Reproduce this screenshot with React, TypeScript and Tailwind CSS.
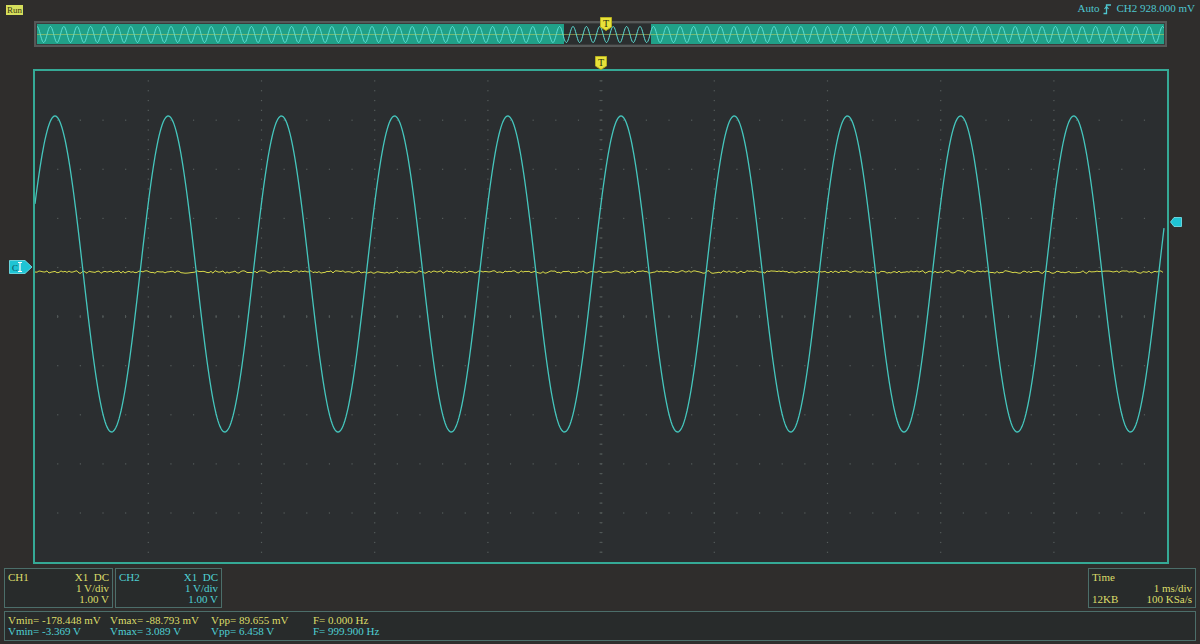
import React from "react";

const W = 1132;
const H = 491;

function sinePath(): string {
  const pts: string[] = [];
  const cy = 203;
  const amp = 158;
  const period = 113.2;
  const peak = 20;
  for (let x = 0; x <= W - 3; x += 1) {
    const y = cy - amp * Math.cos((2 * Math.PI * (x - peak)) / period);
    pts.push(`${x === 0 ? "M" : "L"}${x.toFixed(1)},${y.toFixed(1)}`);
  }
  return pts.join(" ");
}

function noisePath(): string {
  const pts: string[] = [];
  let seed = 7;
  const rnd = () => {
    seed = (seed * 9301 + 49297) % 233280;
    return seed / 233280;
  };
  for (let x = 0; x <= W - 3; x += 2) {
    const y = 201 + (rnd() - 0.5) * 2.6;
    pts.push(`${x === 0 ? "M" : "L"}${x},${y.toFixed(1)}`);
  }
  return pts.join(" ");
}

function overviewPath(): string {
  const pts: string[] = [];
  const period = 13.4;
  for (let x = 0; x <= 1127; x += 0.5) {
    const y = 10.5 - 8 * Math.cos((2 * Math.PI * x) / period);
    pts.push(`${x === 0 ? "M" : "L"}${x},${y.toFixed(1)}`);
  }
  return pts.join(" ");
}

function Grid() {
  const els: React.ReactNode[] = [];
  const dx = W / 10;
  const dy = H / 10;
  for (let r = 1; r < 10; r++) {
    const y = r * dy;
    for (let i = 1; i < 50; i++) {
      const x = (i * dx) / 5;
      els.push(<rect key={`h${r}-${i}`} x={x - 0.5} y={y - 0.5} width={1.2} height={1.2} fill="#565d5c" />);
    }
  }
  for (let c = 1; c < 10; c++) {
    const x = c * dx;
    for (let i = 1; i < 50; i++) {
      const y = (i * dy) / 5;
      els.push(<rect key={`v${c}-${i}`} x={x - 0.5} y={y - 0.5} width={1.2} height={1.2} fill="#565d5c" />);
    }
  }
  const cx = 5 * dx;
  const cyy = 5 * dy;
  for (let i = 1; i < 50; i++) {
    const y = (i * dy) / 5;
    els.push(<line key={`ct${i}`} x1={cx - 1.5} x2={cx + 1.5} y1={y} y2={y} stroke="#525958" strokeWidth={1} />);
    const x = (i * dx) / 5;
    els.push(<line key={`ch${i}`} x1={x} x2={x} y1={cyy - 1.5} y2={cyy + 1.5} stroke="#525958" strokeWidth={1} />);
  }
  return <g>{els}</g>;
}

function TMarker() {
  return (
    <svg width="12" height="14" viewBox="0 0 12 14">
      <path d="M0.5,0.5 H11.5 V10 L6,13.5 L0.5,10 Z" fill="#e8e23a" stroke="#b8b020" strokeWidth="1" />
      <text x="6" y="9.5" textAnchor="middle" fontSize="10" fontFamily="'Liberation Serif', serif" fill="#2a2a10">T</text>
    </svg>
  );
}

export default function App() {
  const serif = { fontFamily: "'Liberation Serif', 'DejaVu Serif', serif" };
  return (
    <div className="w-[1200px] h-[644px] bg-[#2f2d2c] flex flex-col overflow-hidden" style={serif}>
      {/* Top status row */}
      <div className="h-[21px] flex items-start justify-between px-[5px]">
        <div className="mt-[5px] ml-[1px] bg-[#d6de5c] text-[#3a3a10] text-[9px] leading-[10px] h-[10px] px-[1px]">Run</div>
        <div className="mt-[1px] flex items-center gap-[3px] text-[11px] text-[#4ec6cf] leading-[15px]">
          <span>Auto</span>
          <svg width="9" height="12" viewBox="0 0 9 12" className="mx-[1px]">
            <path d="M0.5,10.5 H3.5 V2 H8" fill="none" stroke="#4ec6cf" strokeWidth="1.3" />
            <path d="M1.5,6 L3.5,3.5 L5.5,6" fill="none" stroke="#4ec6cf" strokeWidth="1.1" />
          </svg>
          <span>CH2 928.000 mV</span>
        </div>
      </div>

      {/* Overview row */}
      <div className="h-[26px] pl-[34px] relative">
        <div className="w-[1133px] h-[26px] border-2 border-[#565858] bg-[#3a3c3c] p-[1px]">
          <svg width="1127" height="20" viewBox="0 0 1127 20" className="block">
            <rect x="0" y="0" width="1127" height="20" fill="#20a088" />
            <rect x="527" y="0" width="87" height="20" fill="#2b2e2f" />
            <line x1="0" x2="1127" y1="10.5" y2="10.5" stroke="#c9d25a" strokeOpacity="0.5" strokeWidth="1" />
            <path d={overviewPath()} fill="none" stroke="#5fe0d6" strokeWidth="1" />
          </svg>
        </div>
        <div className="absolute left-[600px] top-[-4px]">
          <TMarker />
        </div>
      </div>

      {/* Gap row with T marker */}
      <div className="h-[22px] relative">
        <div className="absolute left-[595px] top-[9px]">
          <TMarker />
        </div>
      </div>

      {/* Main plot row */}
      <div className="h-[495px] flex">
        <div className="w-[33px] relative">
          <svg width="24" height="14" viewBox="0 0 24 14" className="absolute left-[9px] top-[191px]">
            <path d="M0.5,0.5 H16 L23,7 L16,13.5 H0.5 Z" fill="#1fc4d4" stroke="#7ae8f0" strokeWidth="0.8" />
            <text x="3" y="10.5" fontSize="9" fontFamily="'Liberation Serif', serif" fill="#0c4a56">C</text>
            <path d="M11,2.5 V11.5 M9,2.5 H13 M9,11.5 H13" stroke="#ffffff" strokeWidth="1.2" />
          </svg>
        </div>
        <div className="w-[1136px] h-[495px] border-2 border-[#35a996] bg-[#2b2e30]">
          <svg width={W} height={H} viewBox={`0 0 ${W} ${H}`} className="block">
            <Grid />
            <path d={noisePath()} fill="none" stroke="#d7d84a" strokeWidth="1" />
            <path d={sinePath()} fill="none" stroke="#45c6bd" strokeWidth="1.3" />
          </svg>
        </div>
        <div className="w-[31px] relative">
          <svg width="12" height="10" viewBox="0 0 12 10" className="absolute left-[1px] top-[148px]">
            <path d="M0.5,5 L4,0.5 H11.5 V9.5 H4 Z" fill="#1fc4d4" stroke="#7ae8f0" strokeWidth="0.8" />
          </svg>
        </div>
      </div>

      {/* Channel info panels */}
      <div className="mt-[4px] h-[40px] flex px-[4px] text-[11px] leading-[11px]">
        <div className="w-[109px] h-[40px] border border-[#4c6e6a] bg-[#282b2b] px-[3px] pt-[3px] text-[#dcdd6a] flex flex-col">
          <div className="flex justify-between">
            <span>CH1</span>
            <span>X1&nbsp;&nbsp;DC</span>
          </div>
          <div className="text-right">1 V/div</div>
          <div className="text-right">1.00 V</div>
        </div>
        <div className="ml-[2px] w-[107px] h-[40px] border border-[#4c6e6a] bg-[#282b2b] px-[3px] pt-[3px] text-[#4fd0d4] flex flex-col">
          <div className="flex justify-between">
            <span>CH2</span>
            <span>X1&nbsp;&nbsp;DC</span>
          </div>
          <div className="text-right">1 V/div</div>
          <div className="text-right">1.00 V</div>
        </div>
        <div className="flex-1" />
        <div className="w-[108px] h-[40px] border border-[#4c6e6a] bg-[#282b2b] px-[3px] pt-[3px] text-[#dcdd6a] flex flex-col">
          <div>Time</div>
          <div className="text-right">1 ms/div</div>
          <div className="flex justify-between">
            <span>12KB</span>
            <span>100 KSa/s</span>
          </div>
        </div>
      </div>

      {/* Measurements bar */}
      <div className="mt-[3px] mx-[4px] h-[30px] border border-[#4c6e6a] bg-[#282b2b] pl-[3px] pt-[3px] text-[11px] leading-[11px]">
        <div className="flex text-[#dcdd6a]">
          <span className="w-[102px]">Vmin= -178.448 mV</span>
          <span className="w-[101px]">Vmax= -88.793 mV</span>
          <span className="w-[102px]">Vpp= 89.655 mV</span>
          <span>F= 0.000 Hz</span>
        </div>
        <div className="flex text-[#4fd0d4]">
          <span className="w-[102px]">Vmin= -3.369 V</span>
          <span className="w-[101px]">Vmax= 3.089 V</span>
          <span className="w-[102px]">Vpp= 6.458 V</span>
          <span>F= 999.900 Hz</span>
        </div>
      </div>
    </div>
  );
}
